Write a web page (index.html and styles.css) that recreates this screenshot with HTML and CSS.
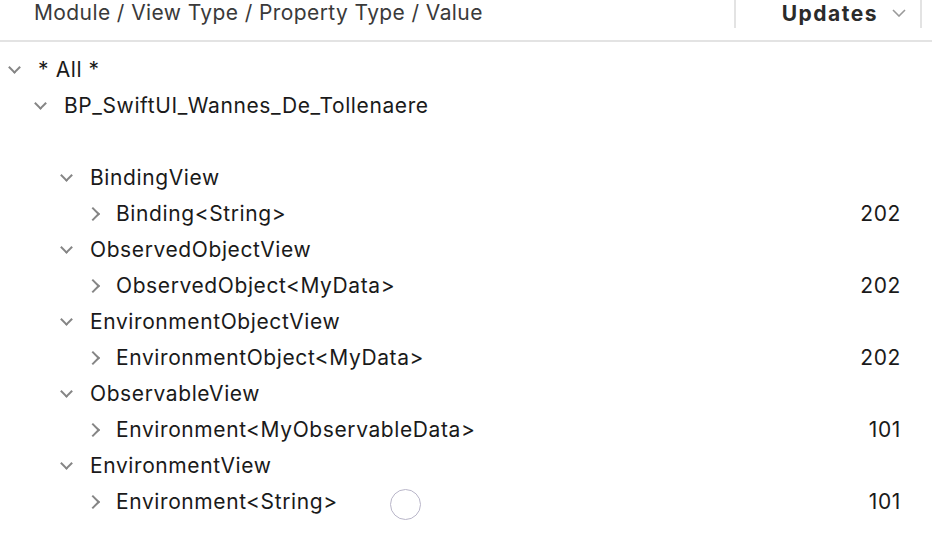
FILE: index.html
```html
<!DOCTYPE html>
<html lang="en">
<head>
    <meta charset="UTF-8">
    <title>Updates</title>
    <link rel="stylesheet" href="styles.css">
</head>
<body>
    <div class="header">
        <div class="col-name">Module / View Type / Property Type / Value</div>
        <div class="col-updates">
            <span>Updates</span>
            <svg class="sort" width="14" height="8" viewBox="0 0 14 8"><path d="M1 1l6 6 6-6" fill="none" stroke="#9a9a9a" stroke-width="1.6"/></svg>
        </div>
        <div class="col-end"></div>
    </div>

    <div class="tree">
        <div class="row lvl0"><span class="tw down"></span><span class="label">* All *</span></div>
        <div class="row lvl1"><span class="tw down"></span><span class="label">BP_SwiftUI_Wannes_De_Tollenaere</span></div>
        <div class="row"></div>
        <div class="row lvl2"><span class="tw down"></span><span class="label">BindingView</span></div>
        <div class="row lvl3"><span class="tw right"></span><span class="label">Binding&lt;String&gt;</span><span class="count">202</span></div>
        <div class="row lvl2"><span class="tw down"></span><span class="label">ObservedObjectView</span></div>
        <div class="row lvl3"><span class="tw right"></span><span class="label">ObservedObject&lt;MyData&gt;</span><span class="count">202</span></div>
        <div class="row lvl2"><span class="tw down"></span><span class="label">EnvironmentObjectView</span></div>
        <div class="row lvl3"><span class="tw right"></span><span class="label">EnvironmentObject&lt;MyData&gt;</span><span class="count">202</span></div>
        <div class="row lvl2"><span class="tw down"></span><span class="label">ObservableView</span></div>
        <div class="row lvl3"><span class="tw right"></span><span class="label">Environment&lt;MyObservableData&gt;</span><span class="count">101</span></div>
        <div class="row lvl2"><span class="tw down"></span><span class="label">EnvironmentView</span></div>
        <div class="row lvl3"><span class="tw right"></span><span class="label">Environment&lt;String&gt;</span><span class="count">101</span></div>
    </div>

    <!-- pointer circle -->
    <div class="cursor"></div>
</body>
</html>
```

FILE: styles.css
```css
body {
    margin: 0;
    background: white;
    font-family: Inter, "Noto Sans", sans-serif;
    color: #1a1a1a;
    width: 932px;
    height: 542px;
    overflow: hidden;
    position: relative;
}

.header {
    display: flex;
    height: 40px;
    border-bottom: 2px solid #e3e3e3;
    box-sizing: content-box;
}

.col-name {
    flex: 1;
    padding-left: 34px;
    font-size: 21px;
    letter-spacing: 0.4px;
    color: #3a3a3a;
    line-height: 26px;
}

.col-updates {
    width: 186px;
    border-left: 2px solid #e3e3e3;
    height: 28px;
    display: flex;
    align-items: center;
    justify-content: flex-end;
    gap: 14px;
    padding-right: 14px;
    padding-bottom: 2px;
    box-sizing: border-box;
    font-size: 21px;
    letter-spacing: 1.5px;
    font-weight: 700;
    color: #2b2b2b;
}

.col-end {
    width: 10px;
    border-left: 2px solid #e3e3e3;
    height: 28px;
}

.tree {
    padding-top: 9px;
}

.row {
    display: flex;
    align-items: center;
    height: 36px;
    font-size: 21px;
    letter-spacing: 0.6px;
    position: relative;
}

.lvl0 { padding-left: 8px; }
.lvl1 { padding-left: 34px; }
.lvl2 { padding-left: 60px; }
.lvl3 { padding-left: 86px; }

.tw {
    width: 14px;
    height: 14px;
    margin-right: 16px;
    position: relative;
}

.tw::before {
    content: "";
    position: absolute;
    width: 7px;
    height: 7px;
    border-right: 2px solid #858585;
    border-bottom: 2px solid #858585;
}

.tw.down::before {
    left: 2px;
    top: 1px;
    transform: rotate(45deg);
}

.tw.right {
    width: 10px;
    margin-left: 4px;
    margin-right: 16px;
}

.tw.right::before {
    left: -2px;
    top: 3px;
    width: 8px;
    height: 8px;
    transform: rotate(-45deg);
}

.count {
    position: absolute;
    right: 31px;
}

.cursor {
    position: absolute;
    left: 390px;
    top: 489px;
    width: 31px;
    height: 31px;
    border: 1.5px solid #b9b6c9;
    border-radius: 50%;
    box-sizing: border-box;
}
```
